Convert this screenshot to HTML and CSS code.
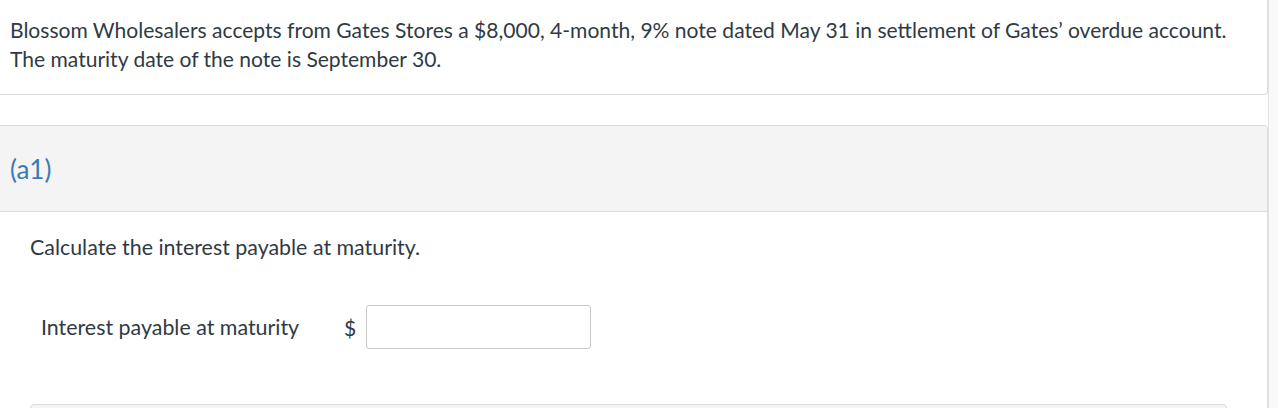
FILE: index.html
```html
<!DOCTYPE html>
<html>
<head>
<meta charset="utf-8">
<link rel="stylesheet" href="styles.css">
</head>
<body>
<div class="page">
  <div class="main">
    <div class="card intro">
      <p class="intro-text">Blossom Wholesalers accepts from Gates Stores a $8,000, 4-month, 9% note dated May 31 in settlement of Gates’ overdue account. The maturity date of the note is September 30.</p>
    </div>
    <div class="card part">
      <div class="part-header"><span class="part-label">(a1)</span></div>
      <div class="part-body">
        <p class="instruction">Calculate the interest payable at maturity.</p>
        <div class="answer-row">
          <span class="answer-label">Interest payable at maturity</span>
          <span class="currency">$</span>
          <input class="answer-input" type="text">
        </div>
        <div class="next-box"></div>
      </div>
    </div>
  </div>
  <div class="side-strip"></div>
</div>
</body>
</html>
```

FILE: styles.css
```css
html, body {
  margin: 0;
  padding: 0;
  background: #fff;
  height: 408px;
  overflow: hidden;
}
body {
  font-family: Lato, "Open Sans", sans-serif;
  color: #2f3a44;
}
.page {
  display: flex;
  height: 408px;
}
.main {
  width: 1268px;
  flex-shrink: 0;
  display: flex;
  flex-direction: column;
}
.side-strip {
  flex: 1;
  background: #f9f9f9;
  border-left: 1px solid #e2e2e2;
}
.card {
  background: #fff;
  border-right: 1px solid #dcdcdc;
  box-sizing: border-box;
  flex-shrink: 0;
}
.intro {
  height: 95px;
  border-bottom: 1px solid #dcdcdc;
  border-bottom-right-radius: 4px;
  padding: 15px 30px 0 10px;
}
.intro-text {
  margin: 0;
  font-size: 21.05px;
  line-height: 29px;
}
.part {
  margin-top: 30px;
  border-top: 1px solid #dcdcdc;
  border-top-right-radius: 4px;
  flex: 1 0 auto;
}
.part-header {
  height: 85px;
  background: #f4f4f4;
  border-bottom: 1px solid #dcdcdc;
  display: flex;
  align-items: center;
  padding-left: 10px;
}
.part-label {
  color: #3c7ab4;
  font-size: 26px;
}
.part-body {
  padding: 21px 0 0 30px;
}
.instruction {
  margin: 0;
  font-size: 21.4px;
  line-height: 28px;
}
.answer-row {
  display: flex;
  align-items: center;
  margin-top: 44px;
  padding-left: 11px;
}
.answer-label {
  font-size: 21.4px;
  width: 303px;
}
.currency {
  font-size: 21px;
  width: 22px;
}
.answer-input {
  width: 225px;
  height: 44px;
  box-sizing: border-box;
  border: 1px solid #c8c8c8;
  border-radius: 3px;
  margin: 0;
}
.next-box {
  margin-top: 55px;
  margin-right: 40px;
  height: 20px;
  background: #f4f4f4;
  border: 1px solid #dcdcdc;
  border-radius: 4px;
}
```
